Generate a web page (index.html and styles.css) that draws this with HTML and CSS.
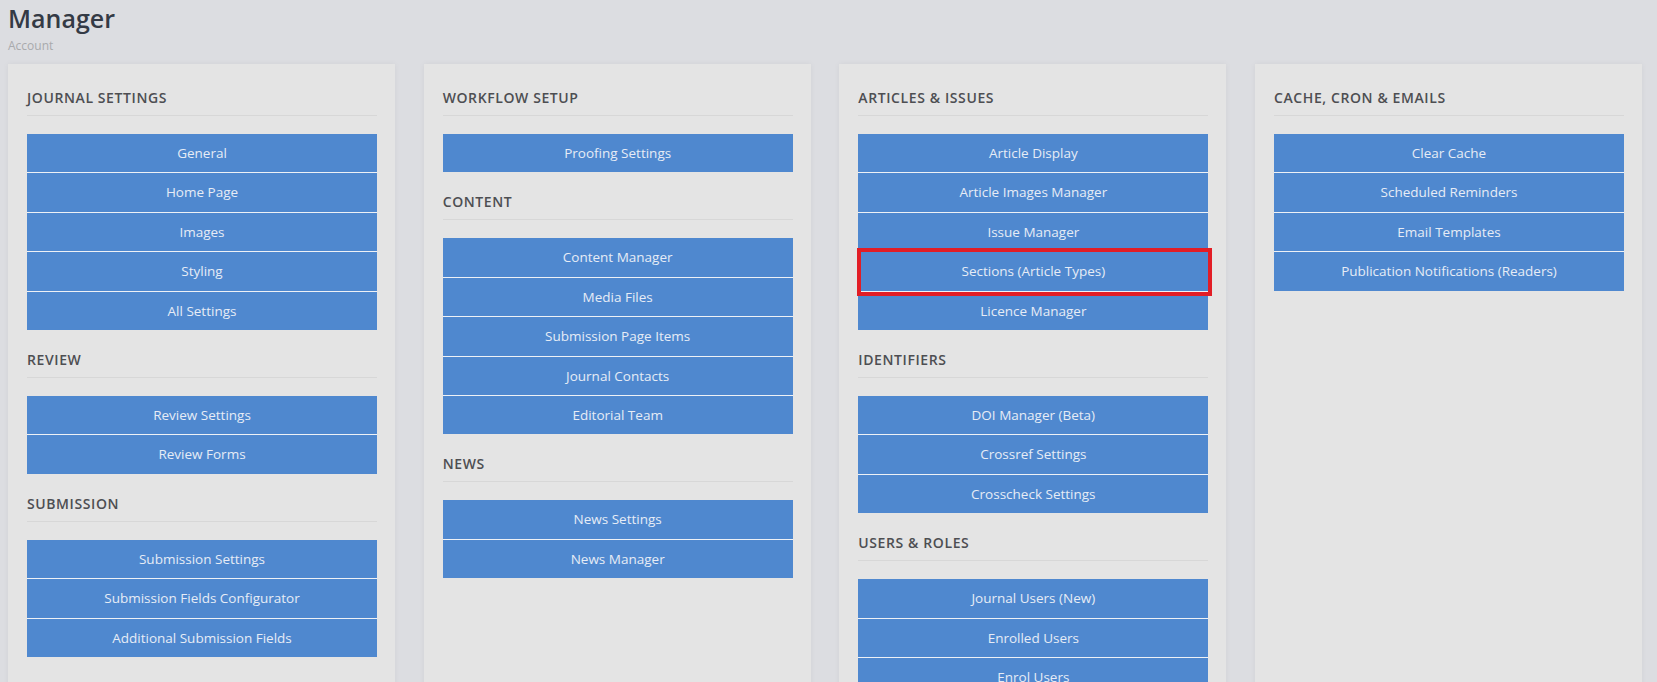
FILE: index.html
```html
<!DOCTYPE html>
<html lang="en">
<head>
    <meta charset="UTF-8">
    <meta name="viewport" content="width=device-width, initial-scale=1.0">
    <title>Manager</title>
    <link rel="stylesheet" href="styles.css">
</head>
<body>
    <div class="page-head">
        <h1>Manager</h1>
        <div class="crumb">Account</div>
    </div>

    <div class="board">
        <div class="card">
            <h2>Journal Settings</h2>
            <div class="links">
                <a class="btn" href="#">General</a>
                <a class="btn" href="#">Home Page</a>
                <a class="btn" href="#">Images</a>
                <a class="btn" href="#">Styling</a>
                <a class="btn" href="#">All Settings</a>
            </div>
            <h2>Review</h2>
            <div class="links">
                <a class="btn" href="#">Review Settings</a>
                <a class="btn" href="#">Review Forms</a>
            </div>
            <h2>Submission</h2>
            <div class="links">
                <a class="btn" href="#">Submission Settings</a>
                <a class="btn" href="#">Submission Fields Configurator</a>
                <a class="btn" href="#">Additional Submission Fields</a>
            </div>
        </div>

        <div class="card">
            <h2>Workflow Setup</h2>
            <div class="links">
                <a class="btn" href="#">Proofing Settings</a>
            </div>
            <h2>Content</h2>
            <div class="links">
                <a class="btn" href="#">Content Manager</a>
                <a class="btn" href="#">Media Files</a>
                <a class="btn" href="#">Submission Page Items</a>
                <a class="btn" href="#">Journal Contacts</a>
                <a class="btn" href="#">Editorial Team</a>
            </div>
            <h2>News</h2>
            <div class="links">
                <a class="btn" href="#">News Settings</a>
                <a class="btn" href="#">News Manager</a>
            </div>
        </div>

        <div class="card">
            <h2>Articles &amp; Issues</h2>
            <div class="links">
                <a class="btn" href="#">Article Display</a>
                <a class="btn" href="#">Article Images Manager</a>
                <a class="btn" href="#">Issue Manager</a>
                <a class="btn marked" href="#">Sections (Article Types)</a>
                <a class="btn" href="#">Licence Manager</a>
            </div>
            <h2>Identifiers</h2>
            <div class="links">
                <a class="btn" href="#">DOI Manager (Beta)</a>
                <a class="btn" href="#">Crossref Settings</a>
                <a class="btn" href="#">Crosscheck Settings</a>
            </div>
            <h2>Users &amp; Roles</h2>
            <div class="links">
                <a class="btn" href="#">Journal Users (New)</a>
                <a class="btn" href="#">Enrolled Users</a>
                <a class="btn" href="#">Enrol Users</a>
                <a class="btn" href="#">Journal Roles</a>
            </div>
        </div>

        <div class="card">
            <h2>Cache, Cron &amp; Emails</h2>
            <div class="links">
                <a class="btn" href="#">Clear Cache</a>
                <a class="btn" href="#">Scheduled Reminders</a>
                <a class="btn" href="#">Email Templates</a>
                <a class="btn" href="#">Publication Notifications (Readers)</a>
            </div>
        </div>
    </div>
</body>
</html>
```

FILE: styles.css
```css
body {
    font-family: "Open Sans", "Noto Sans", sans-serif;
    margin: 0;
    padding: 0 15px 0 8px;
    background: #dcdde1;
    color: #3a3f4a;
}
.page-head h1 {
    margin: 0;
    padding-top: 2px;
    font-size: 25px;
    font-weight: 600;
    line-height: 32px;
    color: #343a45;
}
.crumb {
    margin-top: 4px;
    font-size: 12px;
    line-height: 16px;
    color: #a9aaad;
}
.board {
    display: grid;
    grid-template-columns: repeat(4, 1fr);
    gap: 28.67px;
    margin-top: 10px;
}
.card {
    background: #e4e4e4;
    padding: 23px 18px 30px 19px;
    box-shadow: 0 0 6px rgba(0, 0, 0, 0.05);
}
.card h2 {
    margin: 19px 0 18px;
    padding-top: 1px;
    padding-bottom: 7px;
    border-bottom: 1px solid #d7d7d7;
    font-size: 14px;
    font-weight: 600;
    line-height: 20px;
    letter-spacing: 0.6px;
    text-transform: uppercase;
    color: #4d4e52;
}
.card h2:first-child {
    margin-top: 0;
}
.links {
    display: flex;
    flex-direction: column;
}
.btn {
    display: block;
    height: 38.4px;
    line-height: 38.4px;
    background: #4f88cf;
    color: #e6ecf6;
    font-size: 13.5px;
    text-align: center;
    text-decoration: none;
}
.btn + .btn {
    border-top: 1px solid #eef1f6;
}
.marked {
    position: relative;
}
.marked::after {
    content: "";
    position: absolute;
    top: -4px;
    left: -1px;
    right: -4px;
    bottom: -5px;
    border: 4.5px solid #e21d25;
}
```
